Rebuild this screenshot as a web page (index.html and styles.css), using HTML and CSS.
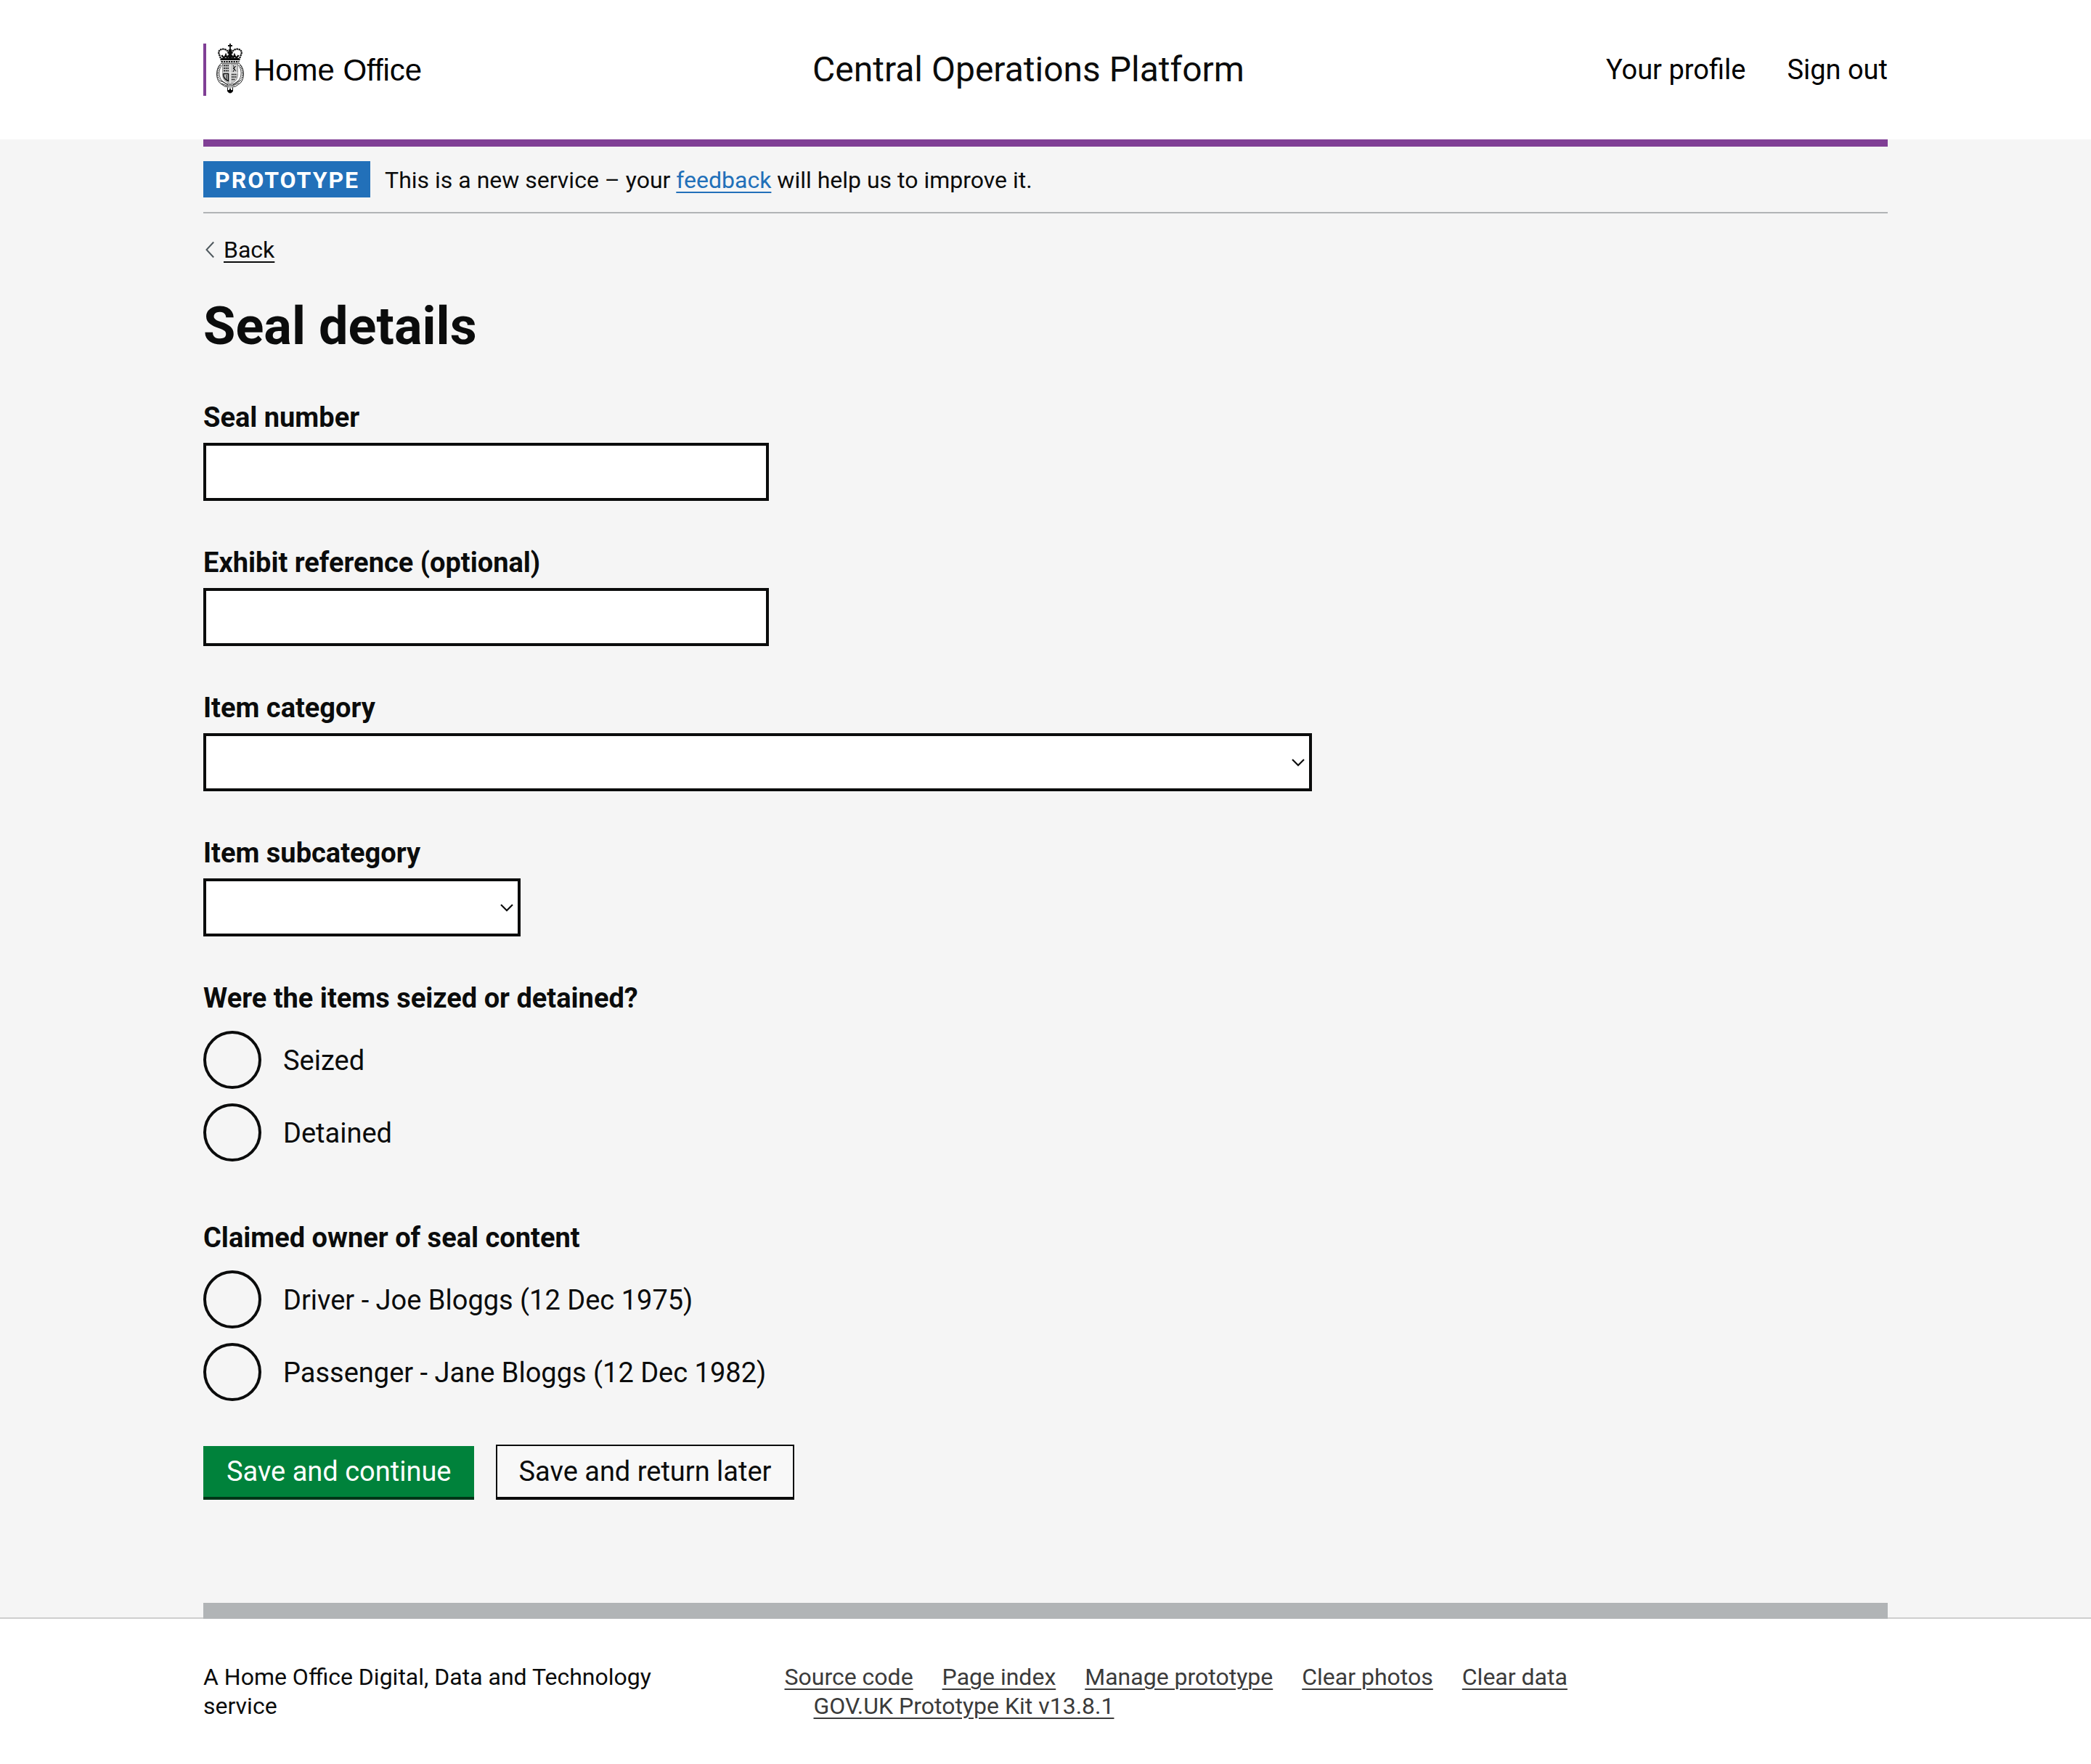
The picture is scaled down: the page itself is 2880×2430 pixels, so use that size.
FILE: index.html
```html
<!DOCTYPE html>
<html lang="en">
<head>
<meta charset="utf-8">
<title>Seal details - Central Operations Platform</title>
<link rel="stylesheet" href="styles.css">
</head>
<body>
<header class="header">
  <div class="container header-inner">
    <a class="logo" href="#">
      <svg class="crest" viewBox="0 0 38 70" aria-hidden="true">
        <g fill="none" stroke="#0b0c0c">
          <path d="M19 0v8M16 3h6" stroke-width="1.800"/>
          <path d="M7 23L3.500 14C1.500 8 11 5 15.500 10.500L17 14M31 23l3.500-9C36.500 8 27 5 22.500 10.500L21 14" stroke-width="2.200" stroke-dasharray="2.400 .7"/>
          <path d="M19 8v14" stroke-width="4.500"/>
          <path d="M7.500 16q3 6 5.500 0q2 6 4 0M30.500 16q-3 6-5.500 0q-2 6-4 0" stroke-width="2.400"/>
          <path d="M6.500 21.500h25" stroke-width="3"/>
          <path d="M6.500 25h25" stroke-width="2" stroke-dasharray="2.400 1"/>
          <path d="M7 27.200h24" stroke-width=".8"/>
          <path d="M7 27C-1 33 -1.500 48 5 54.500Q11 60.500 19 60.500T33 54.500C39.500 48 39 33 31 27" stroke-width=".9"/>
          <path d="M8.500 29C2.500 35 2.500 46 8 51.500Q13 56.500 19 56.500T30 51.500C35.500 46 35.500 35 29.500 29" stroke-width=".7"/>
          <path d="M5.500 30C.5 37 .5 47 6.500 52.800M32.500 30C37.500 37 37.500 47 31.500 52.800" stroke-width="2" stroke-dasharray=".9 1.500"/>
          <path d="M7 55q12 7 24-1M6 51l10 6M32 51l-9 6" stroke-width=".9"/>
        </g>
        <path d="M8.500 28h21v15q0 9-10.500 12.500Q8.500 52 8.500 43z" fill="#c9c9c9" stroke="#555" stroke-width=".6"/>
        <g fill="none" stroke="#0b0c0c">
          <path d="M19 28v27M8.500 40.500h21" stroke="#eee" stroke-width="1.200"/>
          <path d="M10 30.500h7M10 34h7M10 37.500h7" stroke-width="1.500" stroke-dasharray="2 .7"/>
          <path d="M23 30l2 3-2 1 2 1-2 4M27 31l-3 3 3 4" stroke-width="1"/>
          <path d="M21 42.500h7M21 46h7M21 49.500h5" stroke-width="1.500" stroke-dasharray="1.600 .8"/>
          <path d="M10 41.500h6.500v10q-5.500-2-6.500-7z" stroke-width="1.400"/>
          <path d="M14 43v7" stroke-width="1"/>
          <path d="M15.500 60.500v5.500q3.500 4 7 0v-5.500" fill="#fff" stroke-width="1"/>
        </g>
        <path d="M16 66.200v-2l2-.5.2-2h1.600l.2 2 2 .5v2q-3 3.600-6 0z"/>
      </svg>
      <span class="logo-text">Home Office</span>
    </a>
    <span class="service-name">Central Operations Platform</span>
    <nav class="account-nav"><a href="#">Your profile</a><a href="#">Sign out</a></nav>
  </div>
</header>

<div class="container page">
  <div class="phase-banner">
    <strong class="tag">PROTOTYPE</strong>
    <span class="phase-text">This is a new service – your <a class="link" href="#">feedback</a> will help us to improve it.</span>
  </div>

  <div class="back">
    <svg class="back-icon" viewBox="0 0 12 24" aria-hidden="true"><path d="M11.200 1.500L1.500 12l9.700 10.500"/></svg>
    <a class="back-link" href="#">Back</a>
  </div>

  <main>
    <h1 class="heading">Seal details</h1>
    <form class="form">
      <div class="field">
        <label class="label" for="seal-number">Seal number</label>
        <input class="control input" id="seal-number" type="text">
      </div>
      <div class="field">
        <label class="label" for="exhibit">Exhibit reference (optional)</label>
        <input class="control input" id="exhibit" type="text">
      </div>
      <div class="field">
        <label class="label" for="category">Item category</label>
        <div class="select-wrap select-wide">
          <select class="control select" id="category"><option></option></select>
          <svg class="arrow" viewBox="0 0 18 11" aria-hidden="true"><path d="M1 1.200l8 8 8-8"/></svg>
        </div>
      </div>
      <div class="field">
        <label class="label" for="subcategory">Item subcategory</label>
        <div class="select-wrap select-narrow">
          <select class="control select" id="subcategory"><option></option></select>
          <svg class="arrow" viewBox="0 0 18 11" aria-hidden="true"><path d="M1 1.200l8 8 8-8"/></svg>
        </div>
      </div>
      <div class="group" role="radiogroup" aria-labelledby="status-title">
        <div class="label" id="status-title">Were the items seized or detained?</div>
        <div class="radios">
          <label class="radio"><input class="radio-input" type="radio" name="status"><span class="radio-text">Seized</span></label>
          <label class="radio"><input class="radio-input" type="radio" name="status"><span class="radio-text">Detained</span></label>
        </div>
      </div>
      <div class="group" role="radiogroup" aria-labelledby="owner-title">
        <div class="label" id="owner-title">Claimed owner of seal content</div>
        <div class="radios">
          <label class="radio"><input class="radio-input" type="radio" name="owner"><span class="radio-text">Driver - Joe Bloggs (12 Dec 1975)</span></label>
          <label class="radio"><input class="radio-input" type="radio" name="owner"><span class="radio-text">Passenger - Jane Bloggs (12 Dec 1982)</span></label>
        </div>
      </div>
      <div class="buttons">
        <button class="button primary" type="button">Save and continue</button>
        <button class="button secondary" type="button">Save and return later</button>
      </div>
    </form>
  </main>
</div>

<div class="footer-bar"><div class="container footer-block"></div></div>
<footer class="footer">
  <div class="container footer-inner">
    <p class="footer-org">A Home Office Digital, Data and Technology service</p>
    <ul class="footer-links">
      <li><a href="#">Source code</a></li>
      <li><a href="#">Page index</a></li>
      <li><a href="#">Manage prototype</a></li>
      <li><a href="#">Clear photos</a></li>
      <li><a href="#">Clear data</a></li>
      <li><a href="#">GOV.UK Prototype Kit v13.8.1</a></li>
    </ul>
  </div>
</footer>
</body>
</html>
```
FILE: styles.css
```css
* { box-sizing: border-box; }

body {
  margin: 0;
  background: #f5f5f5;
  color: #0b0c0c;
  font-family: Roboto, "Liberation Sans", sans-serif;
  font-size: 38px;
  line-height: 50px;
}

a {
  color: inherit;
  text-decoration-thickness: 2px;
  text-underline-offset: 0.1578em;
}

.container { width: 2320px; margin: 0 auto; }

/* Header */
.header { background: #fff; }
.header-inner { display: flex; align-items: center; height: 192px; }
.logo {
  display: flex;
  align-items: center;
  width: 839px;
  height: 72px;
  border-left: 4px solid #803f95;
  padding-left: 14px;
  color: #000;
  text-decoration: none;
}
.crest { width: 38px; height: 70px; align-self: flex-start; }
.logo-text {
  margin-left: 13px;
  padding-top: 1px;
  font-family: "Liberation Sans", sans-serif;
  font-size: 42px;
  letter-spacing: -0.05px;
  white-space: nowrap;
}
.service-name { font-size: 48px; }
.account-nav { display: flex; gap: 57px; margin-left: auto; color: #000; }
.account-nav a { text-decoration: none; }

/* Phase banner and back link */
.page { border-top: 10px solid #803f95; }
.phase-banner {
  display: flex;
  align-items: center;
  gap: 20px;
  padding: 20px 0;
  border-bottom: 2px solid #b1b4b6;
  font-size: 32px;
  line-height: 40px;
}
.tag {
  height: 50px;
  padding: 6px 15px 4px 16px;
  background: #2270b9;
  color: #fff;
  letter-spacing: 2px;
}
.phase-text { padding-top: 2px; }
.link { color: #2270b9; }
.back {
  display: flex;
  align-items: center;
  margin: 30px 0 46px;
  padding-left: 3px;
  font-size: 32px;
  line-height: 40px;
}
.back-icon {
  width: 12px;
  height: 24px;
  margin-right: 13px;
  fill: none;
  stroke: #505a5f;
  stroke-width: 2;
}

/* Form */
.heading { margin: 0 0 60px; font-size: 72px; line-height: 80px; letter-spacing: 0.05px; }
.field { margin-bottom: 60px; }
.label { display: block; font-weight: 700; }
.field .label { margin-bottom: 10px; }
.control {
  display: block;
  width: 100%;
  height: 80px;
  margin: 0;
  padding: 10px;
  border: 4px solid #0b0c0c;
  border-radius: 0;
  background: #fff;
  font: inherit;
  appearance: none;
}
.input { width: 779px; }
.select-wrap { display: grid; align-items: center; }
.select-wide { width: 1527px; }
.select-narrow { width: 437px; }
.select, .arrow { grid-area: 1 / 1; }
.arrow {
  width: 18px;
  height: 11px;
  justify-self: end;
  margin-right: 10px;
  fill: none;
  stroke: #0b0c0c;
  stroke-width: 2.2;
}
.group { margin-bottom: 80px; }
.radios { display: flex; flex-direction: column; gap: 20px; margin-top: 20px; }
.radio { display: flex; align-items: center; gap: 30px; }
.radio-text { padding-top: 2px; }
.radio-input {
  appearance: none;
  width: 80px;
  height: 80px;
  margin: 0;
  border: 4px solid #0b0c0c;
  border-radius: 50%;
}
.buttons { display: flex; align-items: flex-end; gap: 30px; margin-top: -20px; }
.button {
  height: 70px;
  padding: 0 31px 0 32px;
  border: 0 solid #0b0c0c;
  font: inherit;
  line-height: 70px;
  white-space: nowrap;
}
.primary { background: #00823b; color: #fff; box-shadow: 0 4px 0 #003618; }
.secondary {
  height: 72px;
  padding: 0 30px;
  border-width: 2px 2px 0;
  background: #f8f8f8;
  color: #0b0c0c;
  box-shadow: 0 4px 0 #0b0c0c;
}

/* Footer */
.footer-bar { margin-top: 146px; background: linear-gradient(#cecece, #cecece) bottom / 100% 2px no-repeat; }
.footer-block { height: 22px; background: #b1b4b6; }
.footer { min-height: 200px; padding-top: 60px; background: #fff; font-size: 32px; line-height: 40px; }
.footer-inner { display: flex; }
.footer-org { width: 640px; margin: 0 160px 0 0; }
.footer-links {
  display: flex;
  flex-wrap: wrap;
  width: 1140px;
  margin: 0;
  padding: 0 0 0 0.5px;
  list-style: none;
  color: #3b3b3b;
}
.footer-links li { margin-right: 40px; }
.footer-links li:last-child { margin: 0 0 0 40px; }
```
